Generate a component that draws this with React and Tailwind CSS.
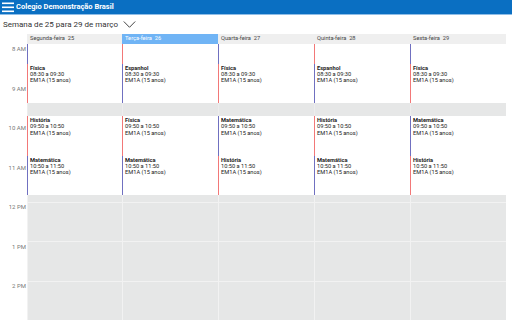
import React from "react";

const RED = "border-[#f27878]";
const BLUE = "border-[#7070c0]";

const days = [
  { name: "Segunda-feira", n: 25, w: "w-[95px]", active: false, first: BLUE, ev: [["Física", "08:30 a 09:30", RED], ["História", "09:50 a 10:50", RED], ["Matemática", "10:50 a 11:50", BLUE]] },
  { name: "Terça-feira", n: 26, w: "w-[96px]", active: true, first: RED, ev: [["Espanhol", "08:30 a 09:30", BLUE], ["Física", "09:50 a 10:50", RED], ["Matemática", "10:50 a 11:50", BLUE]] },
  { name: "Quarta-feira", n: 27, w: "w-[96px]", active: false, first: BLUE, ev: [["Física", "08:30 a 09:30", RED], ["Matemática", "09:50 a 10:50", BLUE], ["História", "10:50 a 11:50", RED]] },
  { name: "Quinta-feira", n: 28, w: "w-[96px]", active: false, first: RED, ev: [["Espanhol", "08:30 a 09:30", BLUE], ["História", "09:50 a 10:50", RED], ["Matemática", "10:50 a 11:50", BLUE]] },
  { name: "Sexta-feira", n: 29, w: "w-[96px]", active: false, first: BLUE, ev: [["Física", "08:30 a 09:30", RED], ["Matemática", "09:50 a 10:50", BLUE], ["História", "10:50 a 11:50", RED]] },
];

function Event({ title, time, color }) {
  return (
    <div className={`h-[39.5px] border-l ${color} pl-[2px] pt-[1px] text-[5.7px] leading-[6.3px] text-[#222]`}>
      <div className="font-bold">{title}</div>
      <div>{time}</div>
      <div>EM1A (15 anos)</div>
    </div>
  );
}

function DayColumn({ d }) {
  return (
    <div className={`${d.w} flex flex-col`}>
      <div className={`h-[19.75px] border-l ${d.first}`} />
      <Event title={d.ev[0][0]} time={d.ev[0][1]} color={d.ev[0][2]} />
      <div className="h-[13.17px] bg-[#e6e7e7] border-l border-[#ededed]" />
      <Event title={d.ev[1][0]} time={d.ev[1][1]} color={d.ev[1][2]} />
      <Event title={d.ev[2][0]} time={d.ev[2][1]} color={d.ev[2][2]} />
      <div className="flex-1 bg-[#e6e7e7] border-l border-[#f2f2f2] flex flex-col">
        <div className="h-[6.58px]" />
        <div className="h-[39.5px] border-t border-[#f2f2f2]" />
        <div className="h-[39.5px] border-t border-[#f2f2f2]" />
        <div className="h-[39.5px] border-t border-[#f2f2f2]" />
      </div>
    </div>
  );
}

export default function App() {
  const hours = ["8 AM", "9 AM", "10 AM", "11 AM", "12 PM", "1 PM", "2 PM"];
  return (
    <div className="w-[512px] h-[320px] overflow-hidden bg-white flex flex-col" style={{ fontFamily: "Roboto, 'Liberation Sans', sans-serif" }}>
      <div className="h-[15px] shrink-0 bg-[#0a6fc2] border-b border-[#8fbde6] flex items-center">
        <svg width="14" height="12" viewBox="0 0 14 12" className="ml-[1px]">
          <rect x="1" y="1.5" width="12" height="1.6" fill="#fff" />
          <rect x="1" y="5.5" width="12" height="1.6" fill="#fff" />
          <rect x="1" y="9.5" width="12" height="1.6" fill="#fff" />
        </svg>
        <span className="ml-[1px] text-white font-bold text-[7.5px] leading-none">Colegio Demonstração Brasil</span>
      </div>
      <div className="h-[19px] shrink-0 flex items-center pl-[3px] text-[#333]">
        <span className="text-[8px] leading-none">Semana de 25 para 29 de março</span>
        <svg width="13" height="9" viewBox="0 0 13 9" className="ml-[5px]">
          <path d="M0.8 1.5 L6.5 7.3 L12.2 1.5" fill="none" stroke="#444" strokeWidth="1" />
        </svg>
      </div>
      <div className="h-[10px] shrink-0 flex">
        <div className="w-[27px]" />
        {days.map((d) => (
          <div key={d.n} className={`${d.w} flex items-center pl-[3px] text-[5.7px] leading-none ${d.active ? "bg-[#70b4f5] text-white" : "bg-[#efefef] text-[#444]"}`}>
            {d.name}&nbsp;&nbsp;{d.n}
          </div>
        ))}
      </div>
      <div className="flex flex-1 overflow-hidden">
        <div className="w-[27px] flex flex-col">
          {hours.map((h) => (
            <div key={h} className="h-[39.5px] shrink-0 text-right pr-[1px] pt-[2px] text-[6px] leading-none text-[#777]">{h}</div>
          ))}
        </div>
        {days.map((d) => (
          <DayColumn key={d.n} d={d} />
        ))}
      </div>
    </div>
  );
}
